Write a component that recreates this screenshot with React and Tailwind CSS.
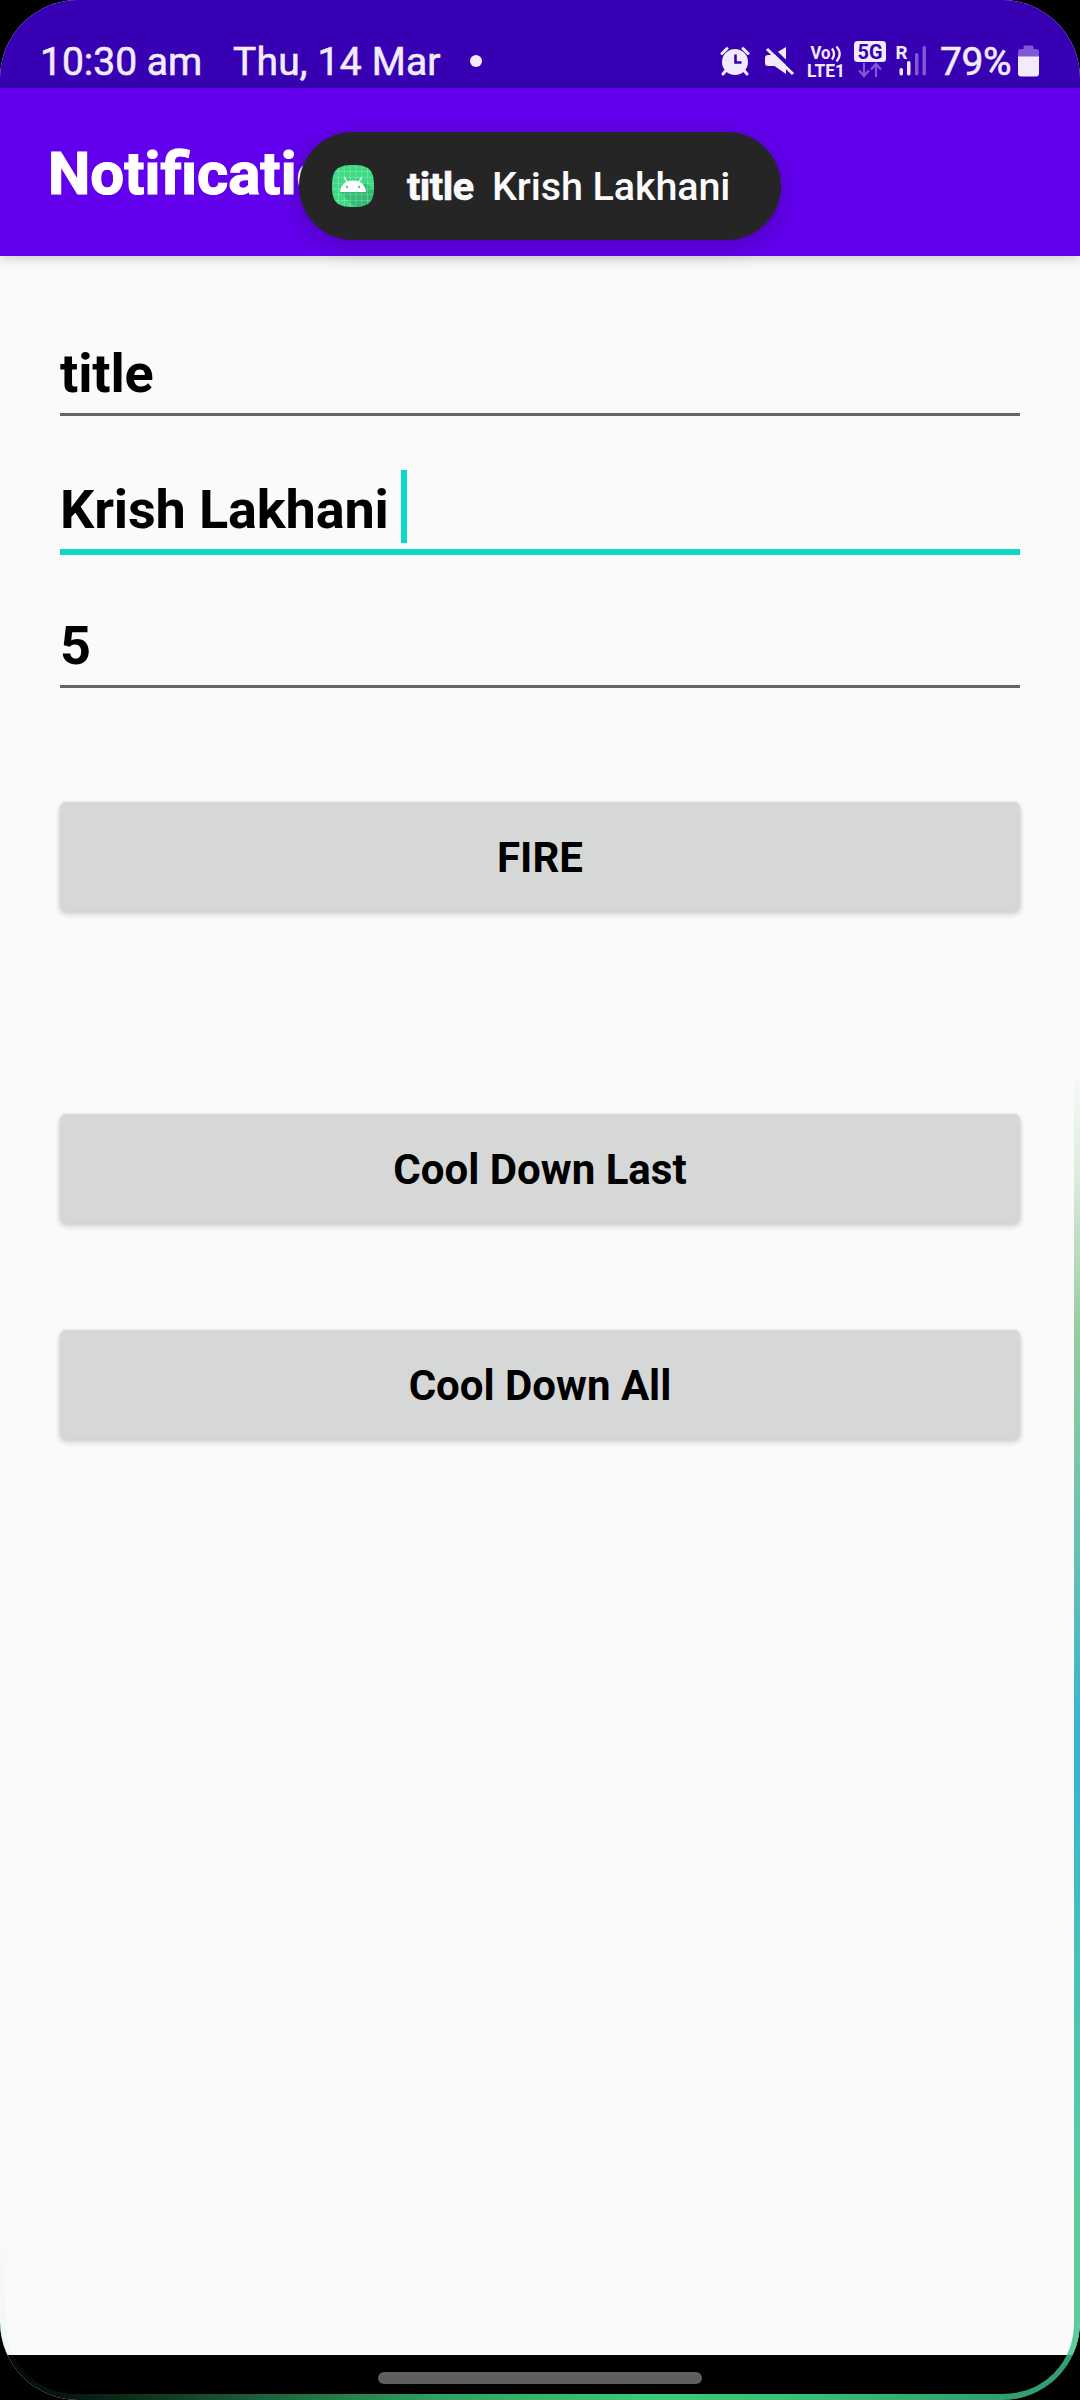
import React from "react";

function AlarmIcon() {
  return (
    <svg className="h-[30px] w-[30px] shrink-0" viewBox="0 0 30 30" fill="none">
      <circle cx="15" cy="16" r="13" fill="#f1ebfb" />
      <path d="M2 7.500 7 2.500M28 7.500 23 2.500M5.500 25 3 28M24.500 25 27 28" stroke="#f1ebfb" strokeWidth="3" strokeLinecap="round" />
      <path d="M15.500 8.500V16.500H21.500" stroke="#3700b3" strokeWidth="2.600" />
    </svg>
  );
}

function MuteIcon() {
  return (
    <svg className="h-[30px] w-[31px] shrink-0" viewBox="0 0 31 30" fill="none">
      <path d="M1 12Q1 9 4 9H8.500L22 1V28L10.500 20H4Q1 20 1 17Z" fill="#f1ebfb" />
      <path d="M5 0 31 25" stroke="#3700b3" strokeWidth="4" />
      <path d="M3 3 29 28" stroke="#f1ebfb" strokeWidth="3" />
    </svg>
  );
}

function VolteIcon() {
  return (
    <svg className="h-[34px] w-[39px] shrink-0 overflow-visible" viewBox="0 0 39 34" fill="#f1ebfb">
      <text x="3.500" y="14" fontFamily="Roboto, sans-serif" fontSize="17.500" fontWeight="700" textLength="20" lengthAdjust="spacingAndGlyphs">Vo</text>
      <path d="M25 3.500Q29 9 25 14.500M29.500 1.500Q36 9 29.500 16.500" fill="none" stroke="#f1ebfb" strokeWidth="2.300" />
      <text x="0" y="31.500" fontFamily="Roboto, sans-serif" fontSize="18" fontWeight="700" textLength="38" lengthAdjust="spacingAndGlyphs">LTE1</text>
    </svg>
  );
}

function FiveGIcon() {
  return (
    <svg className="h-[37px] w-[32px] shrink-0 overflow-visible" viewBox="0 0 32 37" fill="none">
      <rect width="32" height="21" rx="3.500" fill="#f1ebfb" />
      <text x="3.500" y="17.500" fill="#3700b3" fontFamily="Roboto, sans-serif" fontSize="19.500" fontWeight="700" textLength="25" lengthAdjust="spacingAndGlyphs">5G</text>
      <path d="M10 22V35M5 29.500 10 35 15 29.500M22 36V23M17 28.500 22 23 27 28.500" stroke="#8059d6" strokeWidth="2.200" />
    </svg>
  );
}

function SignalIcon() {
  return (
    <svg className="h-[32px] w-[31px] shrink-0 overflow-visible" viewBox="0 0 31 32" fill="#f1ebfb">
      <text x="-.500" y="14" fontFamily="Roboto, sans-serif" fontSize="19" fontWeight="700" textLength="12" lengthAdjust="spacingAndGlyphs">R</text>
      <rect x="3.500" y="23" width="3.500" height="7.500" rx="1.700" />
      <rect x="11" y="16" width="3.500" height="14.500" rx="1.700" />
      <rect x="19" y="8" width="3.500" height="22.500" rx="1.700" fill="#8059d6" />
      <rect x="26.500" y="1" width="3.500" height="29.500" rx="1.700" fill="#8059d6" />
    </svg>
  );
}

function BatteryIcon() {
  return (
    <svg className="h-[32px] w-[21px] shrink-0" viewBox="0 0 21 32" fill="#8059d6">
      <path d="M5.500 4V2Q5.500 .5 7 .5H14Q15.500 .5 15.500 2V4H18Q21 4 21 7V12H0V7Q0 4 3 4Z" />
      <path d="M0 11.500H21V28.500Q21 31.500 18 31.500H3Q0 31.500 0 28.500Z" fill="#f1ebfb" />
    </svg>
  );
}

function AndroidIcon() {
  return (
    <svg className="h-[42px] w-[42px] shrink-0" viewBox="0 0 42 42">
      <defs>
        <clipPath id="squircle">
          <path d="M21 0C37 0 42 5 42 21S37 42 21 42 0 37 0 21 5 0 21 0Z" />
        </clipPath>
      </defs>
      <g clipPath="url(#squircle)">
        <rect width="42" height="42" fill="#3ddc84" />
        <path d="M8 27 34 18 42 26V42H23Z" fill="#2fae6c" opacity=".7" />
        <path d="M6.500 0V42M12.300 0V42M18.100 0V42M23.900 0V42M29.700 0V42M35.500 0V42M0 6.500H42M0 12.300H42M0 18.100H42M0 23.900H42M0 29.700H42M0 35.500H42" stroke="#fff" strokeOpacity=".25" strokeWidth=".8" />
      </g>
      <path d="M8 27C8.500 20 13.500 15.500 21 15.500S33.500 20 34 27Z" fill="#fff" />
      <path d="M12.300 12 15.300 17.500M29.700 12 26.700 17.500" stroke="#fff" strokeWidth="1.200" />
      <circle cx="15" cy="22" r="1.200" fill="#3ddc84" />
      <circle cx="27" cy="22" r="1.200" fill="#3ddc84" />
    </svg>
  );
}

function StatusBar() {
  return (
    <header className="flex h-[88px] shrink-0 items-start bg-[#3700b3] pl-[40px] text-[39px] font-normal leading-[46px] text-[#f1ebfb] [-webkit-text-stroke:0.6px_#f1ebfb]">
      <span className="mt-[39px] w-[193px] shrink-0 whitespace-nowrap">10:30 am</span>
      <span className="mt-[39px] w-[237px] shrink-0 whitespace-nowrap tracking-[0.2px]">Thu, 14 Mar</span>
      <span className="mt-[55px] h-3 w-3 shrink-0 rounded-full bg-[#f1ebfb]" />
      <div className="ml-[238px] mt-[46px] flex items-start [-webkit-text-stroke:0px]">
        <AlarmIcon />
        <div className="ml-[14px]"><MuteIcon /></div>
        <div className="-mt-px ml-[12px]"><VolteIcon /></div>
        <div className="-mt-[5px] ml-[8px]"><FiveGIcon /></div>
        <div className="-mt-px ml-[10px]"><SignalIcon /></div>
      </div>
      <span className="ml-[13px] mt-[39px] w-[78px] shrink-0 whitespace-nowrap tracking-[-0.4px]">79%</span>
      <div className="mt-[45px]"><BatteryIcon /></div>
    </header>
  );
}

function Toast() {
  return (
    <div className="absolute left-[299px] top-[132px] z-20 flex h-[108px] w-[482px] items-center rounded-full bg-[#252525] pl-[33px] text-[39.500px] leading-[46px] text-[#fafafa] shadow-[0_6px_24px_rgba(0,0,0,0.22)]">
      <AndroidIcon />
      <span className="ml-[33px] w-[85px] shrink-0 whitespace-nowrap pt-[2px] font-bold tracking-[-0.5px] [-webkit-text-stroke:0.7px_#fafafa]">title</span>
      <span className="whitespace-nowrap pt-[2px] font-medium tracking-[-0.1px]">Krish Lakhani</span>
    </div>
  );
}

function Field({ value, focused }) {
  return (
    <div className="flex h-[136px] flex-col">
      <div className="mt-[50px] flex h-[73px] items-center text-[54px] font-bold leading-[73px] tracking-[-0.13px] text-black">
        <span className="whitespace-pre pt-[6px]">{value}</span>
        {focused && <span className="ml-[12px] h-[73px] w-[6px] bg-[#0bd8c6]" />}
      </div>
      <div className={focused ? "mt-[6px] h-[6px] shrink-0 bg-[#0bd8c6]" : "mt-[6px] h-[3px] shrink-0 bg-[#666666]"} />
    </div>
  );
}

function Button({ children }) {
  return (
    <button className="flex h-[109px] w-full items-center justify-center rounded-[6px] bg-[#d6d8d7] pt-[2px] text-[42px] font-bold leading-[49px] text-black shadow-[0_3px_6px_rgba(0,0,0,0.18),0_0_4px_rgba(0,0,0,0.06)]">
      {children}
    </button>
  );
}

function EdgeLight() {
  return (
    <svg className="pointer-events-none absolute inset-0 z-30 h-[2400px] w-[1080px]" viewBox="0 0 1080 2400" fill="none">
      <defs>
        <linearGradient id="edgeRight" gradientUnits="userSpaceOnUse" x1="0" y1="1070" x2="0" y2="2320">
          <stop offset="0" stopColor="#6ab873" stopOpacity="0" />
          <stop offset=".08" stopColor="#6ab873" stopOpacity=".2" />
          <stop offset=".21" stopColor="#6ab873" stopOpacity=".7" />
          <stop offset=".54" stopColor="#0ca4c4" stopOpacity=".82" />
          <stop offset=".9" stopColor="#3ac38c" stopOpacity=".82" />
          <stop offset="1" stopColor="#3ac38c" stopOpacity=".82" />
        </linearGradient>
        <linearGradient id="edgeBottom" gradientUnits="userSpaceOnUse" x1="0" y1="0" x2="1080" y2="0">
          <stop offset="0" stopColor="#3ac37c" stopOpacity=".04" />
          <stop offset=".07" stopColor="#3ac37c" stopOpacity=".13" />
          <stop offset=".26" stopColor="#3ac878" stopOpacity=".52" />
          <stop offset=".4" stopColor="#3ac878" stopOpacity=".8" />
          <stop offset=".6" stopColor="#3acb79" stopOpacity="1" />
          <stop offset=".75" stopColor="#3ac87c" stopOpacity=".95" />
          <stop offset=".93" stopColor="#3ac386" stopOpacity=".82" />
          <stop offset="1" stopColor="#3ac38c" stopOpacity=".82" />
        </linearGradient>
        <linearGradient id="edgeLeft" gradientUnits="userSpaceOnUse" x1="0" y1="2215" x2="0" y2="2322">
          <stop offset="0" stopColor="#3ac37c" stopOpacity="0" />
          <stop offset="1" stopColor="#3ac37c" stopOpacity=".04" />
        </linearGradient>
      </defs>
      <path d="M1077 1070V2322" stroke="url(#edgeRight)" strokeWidth="6" />
      <path d="M3 2322C3 2364 34 2397 78 2397H1002C1046 2397 1077 2364 1077 2322" stroke="url(#edgeBottom)" strokeWidth="6" />
      <path d="M3 2215V2322" stroke="url(#edgeLeft)" strokeWidth="6" />
    </svg>
  );
}

export default function App() {
  return (
    <div className="h-[2400px] w-[1080px] overflow-hidden bg-black">
      <div className="relative flex h-[2400px] w-[1080px] flex-col overflow-hidden rounded-[78px] bg-[#fafafa] font-['Roboto',sans-serif]">
        <StatusBar />
        <div className="z-10 flex h-[168px] shrink-0 items-center bg-[#6200ee] pl-[48px] pt-[4px] text-[60px] font-bold leading-[70px] text-white shadow-[0_2px_12px_rgba(0,0,0,0.2)]">
          <span className="whitespace-nowrap [-webkit-text-stroke:1.2px_#fff]">Notification</span>
        </div>
        <main className="flex grow flex-col px-[60px] pt-7">
          <Field value="title" />
          <Field value="Krish Lakhani" focused />
          <Field value="5" />
          <div className="mt-[110px]"><Button>FIRE</Button></div>
          <div className="mt-[203px]"><Button>Cool Down Last</Button></div>
          <div className="mt-[107px]"><Button>Cool Down All</Button></div>
        </main>
        <footer className="flex h-[45px] shrink-0 justify-center bg-black pt-[17px]">
          <div className="h-3 w-[324px] rounded-full bg-[#5f5f5f]" />
        </footer>
        <Toast />
        <EdgeLight />
      </div>
    </div>
  );
}
